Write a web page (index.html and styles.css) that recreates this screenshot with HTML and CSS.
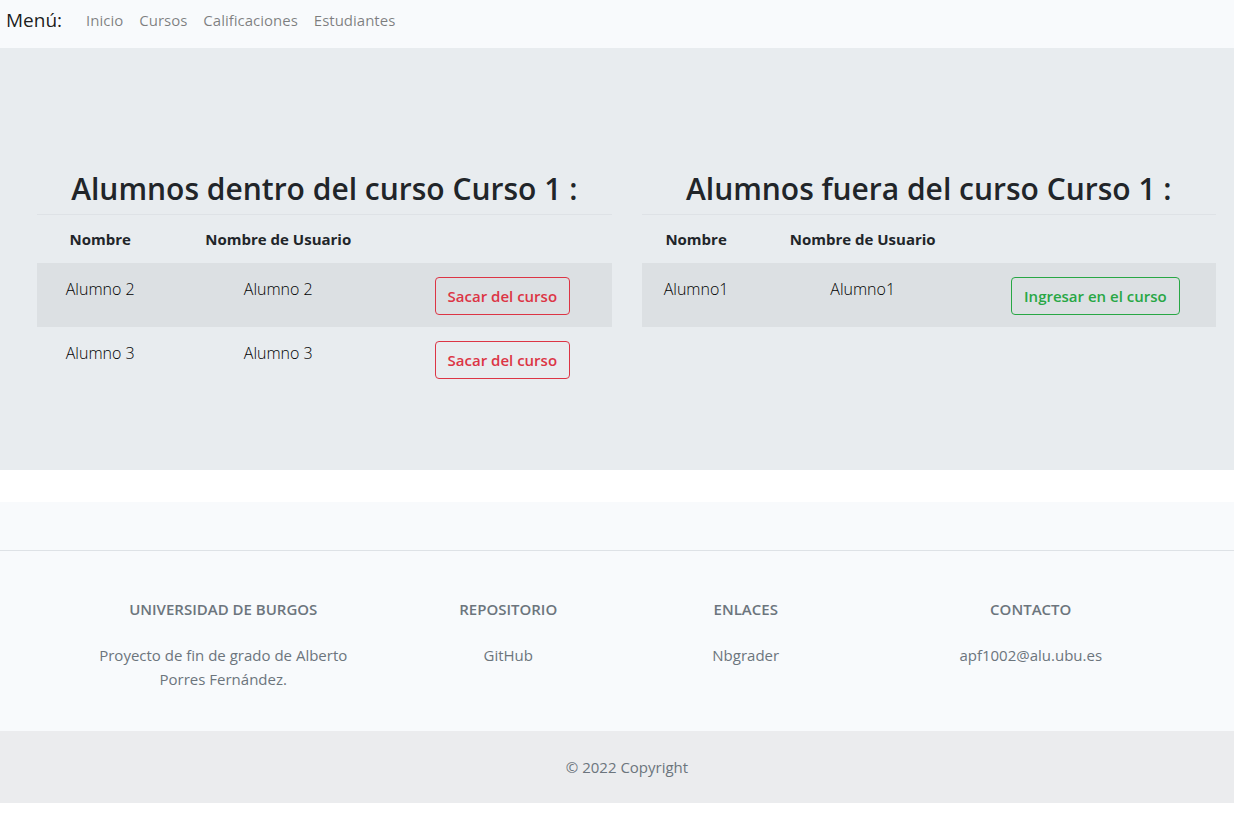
FILE: index.html
```html
<!DOCTYPE html>
<html lang="es">
<head>
<meta charset="utf-8">
<meta name="viewport" content="width=device-width, initial-scale=1">
<title>Alumnos del curso</title>
<link rel="stylesheet" href="styles.css">
</head>
<body>
<nav class="navbar">
  <a class="brand" href="#">Menú:</a>
  <a class="nav-link" href="#">Inicio</a>
  <a class="nav-link" href="#">Cursos</a>
  <a class="nav-link" href="#">Calificaciones</a>
  <a class="nav-link" href="#">Estudiantes</a>
</nav>
<main class="students">
  <section class="panel">
    <h2 class="panel-title">Alumnos dentro del curso Curso 1 :</h2>
    <table class="table table-inside">
      <thead>
        <tr><th class="col-name">Nombre</th><th class="col-user">Nombre de Usuario</th><th></th></tr>
      </thead>
      <tbody>
        <tr><td>Alumno 2</td><td>Alumno 2</td><td><button class="btn btn-danger" type="button">Sacar del curso</button></td></tr>
        <tr><td>Alumno 3</td><td>Alumno 3</td><td><button class="btn btn-danger" type="button">Sacar del curso</button></td></tr>
      </tbody>
    </table>
  </section>
  <section class="panel">
    <h2 class="panel-title">Alumnos fuera del curso Curso 1 :</h2>
    <table class="table table-outside">
      <thead>
        <tr><th class="col-name">Nombre</th><th class="col-user">Nombre de Usuario</th><th></th></tr>
      </thead>
      <tbody>
        <tr><td>Alumno1</td><td>Alumno1</td><td><button class="btn btn-success" type="button">Ingresar en el curso</button></td></tr>
      </tbody>
    </table>
  </section>
</main>
<footer class="footer">
  <div class="footer-top"></div>
  <div class="footer-columns">
    <div class="footer-wide">
      <h6 class="footer-title">Universidad de Burgos</h6>
      <p class="footer-text">Proyecto de fin de grado de Alberto Porres Fernández.</p>
    </div>
    <div class="footer-narrow">
      <h6 class="footer-title">Repositorio</h6>
      <p class="footer-text"><a class="footer-link" href="#">GitHub</a></p>
    </div>
    <div class="footer-narrow">
      <h6 class="footer-title">Enlaces</h6>
      <p class="footer-text"><a class="footer-link" href="#">Nbgrader</a></p>
    </div>
    <div class="footer-wide">
      <h6 class="footer-title">Contacto</h6>
      <p class="footer-text">apf1002@alu.ubu.es</p>
    </div>
  </div>
  <div class="copyright">© 2022 Copyright</div>
</footer>
</body>
</html>
```
FILE: styles.css
```css
* { box-sizing: border-box; }
body {
  margin: 0;
  background: #fff;
  color: #212529;
  font-family: "Segoe UI", "Open Sans", "Noto Sans", sans-serif;
  font-size: 15px;
  line-height: 24px;
}
a { text-decoration: none; }

.navbar {
  display: flex;
  align-items: center;
  gap: 16px;
  padding: 5px 6px 13px;
  background: #f8fafc;
}
.brand {
  margin-right: 8px;
  color: rgba(0, 0, 0, .9);
  font-size: 19px;
  line-height: 30px;
}
.nav-link { color: rgba(0, 0, 0, .5); }

.students {
  display: grid;
  grid-template-columns: 1fr 1fr;
  gap: 30px;
  margin-bottom: 32px;
  padding: 122px 18px 79px 37px;
  background: #e8ecef;
  text-align: center;
}
.panel-title {
  margin: 0 0 6px;
  font-size: 30px;
  font-weight: 600;
  line-height: 38px;
}
.table {
  width: 100%;
  table-layout: fixed;
  border-collapse: separate;
  border-spacing: 0;
  border-top: 1px solid #dee2e6;
}
.table th { padding: 12px 0; font-weight: 700; }
.table td {
  padding: 14px 0 12px;
  color: #000;
  font-size: 16px;
  font-weight: 300;
  vertical-align: top;
}
.table tbody tr:nth-child(odd) { background: #dce0e3; }
.table-inside .col-name { width: 22%; }
.table-inside .col-user { width: 40%; }
.table-outside .col-name { width: 19%; }
.table-outside .col-user { width: 39%; }

.btn {
  display: block;
  margin: 0 auto;
  padding: 6px 12px;
  border: 1px solid currentColor;
  border-radius: 4px;
  background: transparent;
  font: inherit;
  font-size: 15px;
  font-weight: 600;
}
.btn-danger { color: #dc3545; }
.btn-success { color: #28a745; }

.footer {
  background: #f8fafc;
  color: #6c757d;
  text-align: center;
}
.footer-top { height: 49px; border-bottom: 1px solid #dee2e6; }
.footer-columns {
  display: flex;
  justify-content: space-around;
  max-width: 1160px;
  margin: 0 auto;
  padding: 48px 0 40px 20px;
}
.footer-wide { width: 25%; padding: 0 12px; }
.footer-narrow { width: 16.666%; padding: 0 12px; }
.footer-title {
  margin: 0 0 24px;
  font-size: 15px;
  font-weight: 600;
  line-height: 20px;
  text-transform: uppercase;
}
.footer-text { margin: 0; }
.footer-link { color: inherit; }
.copyright { padding: 24px 4px 24px 24px; background: #ebecee; }
```
